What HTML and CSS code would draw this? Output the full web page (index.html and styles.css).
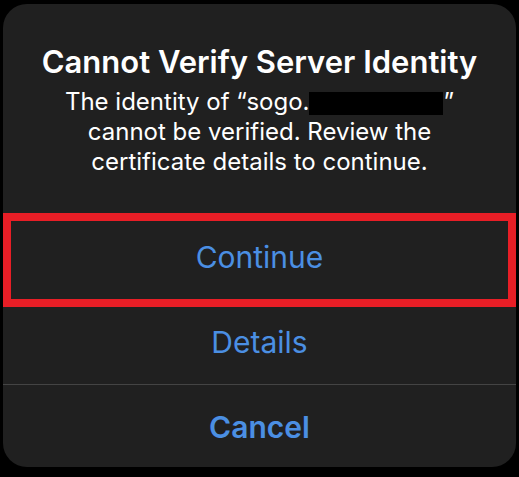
FILE: index.html
```html
<!DOCTYPE html>
<html>
<head>
<meta charset="utf-8">
<link rel="stylesheet" href="styles.css">
</head>
<body>
<div class="screen">
  <div class="alert">
    <div class="header">
      <h1 class="title">Cannot Verify Server Identity</h1>
      <p class="message">The identity of “sogo.<span class="redact"></span>” cannot be verified. Review the certificate details to continue.</p>
    </div>
    <div class="action">Continue</div>
    <div class="action">Details</div>
    <div class="action cancel">Cancel</div>
    <div class="highlight"></div>
  </div>
</div>
</body>
</html>
```
FILE: styles.css
```css
html, body {
  margin: 0;
  padding: 0;
  background: #000;
}
.screen {
  width: 519px;
  height: 477px;
  padding: 4px 0 0 3px;
  box-sizing: border-box;
  font-family: Inter, "Noto Sans", "Liberation Sans", sans-serif;
}
.alert {
  position: relative;
  width: 513px;
  height: 463px;
  background: #202020;
  border-radius: 24px;
  display: flex;
  flex-direction: column;
}
.header {
  height: 211px;
  box-sizing: border-box;
  padding-top: 39px;
  text-align: center;
  color: #fff;
  border-bottom: 1px solid #444;
}
.title {
  margin: 0;
  font-size: 31px;
  font-weight: 600;
  line-height: 38px;
}
.message {
  margin: 6px auto 0;
  width: 412px;
  font-size: 24px;
  line-height: 30px;
  font-weight: 400;
}
.redact {
  display: inline-block;
  width: 134px;
  height: 23px;
  background: #000;
  vertical-align: -5px;
}
.action {
  height: 85px;
  flex: none;
  display: flex;
  align-items: center;
  justify-content: center;
  color: #4b8fe3;
  font-size: 30px;
  border-bottom: 1px solid #444;
  box-sizing: border-box;
}
.action.cancel {
  border-bottom: none;
  font-weight: 600;
  height: 82px;
  padding-top: 2px;
}
.highlight {
  position: absolute;
  left: 0;
  top: 209px;
  width: 513px;
  height: 94px;
  border: 8px solid #e81e26;
  box-sizing: border-box;
}
```
